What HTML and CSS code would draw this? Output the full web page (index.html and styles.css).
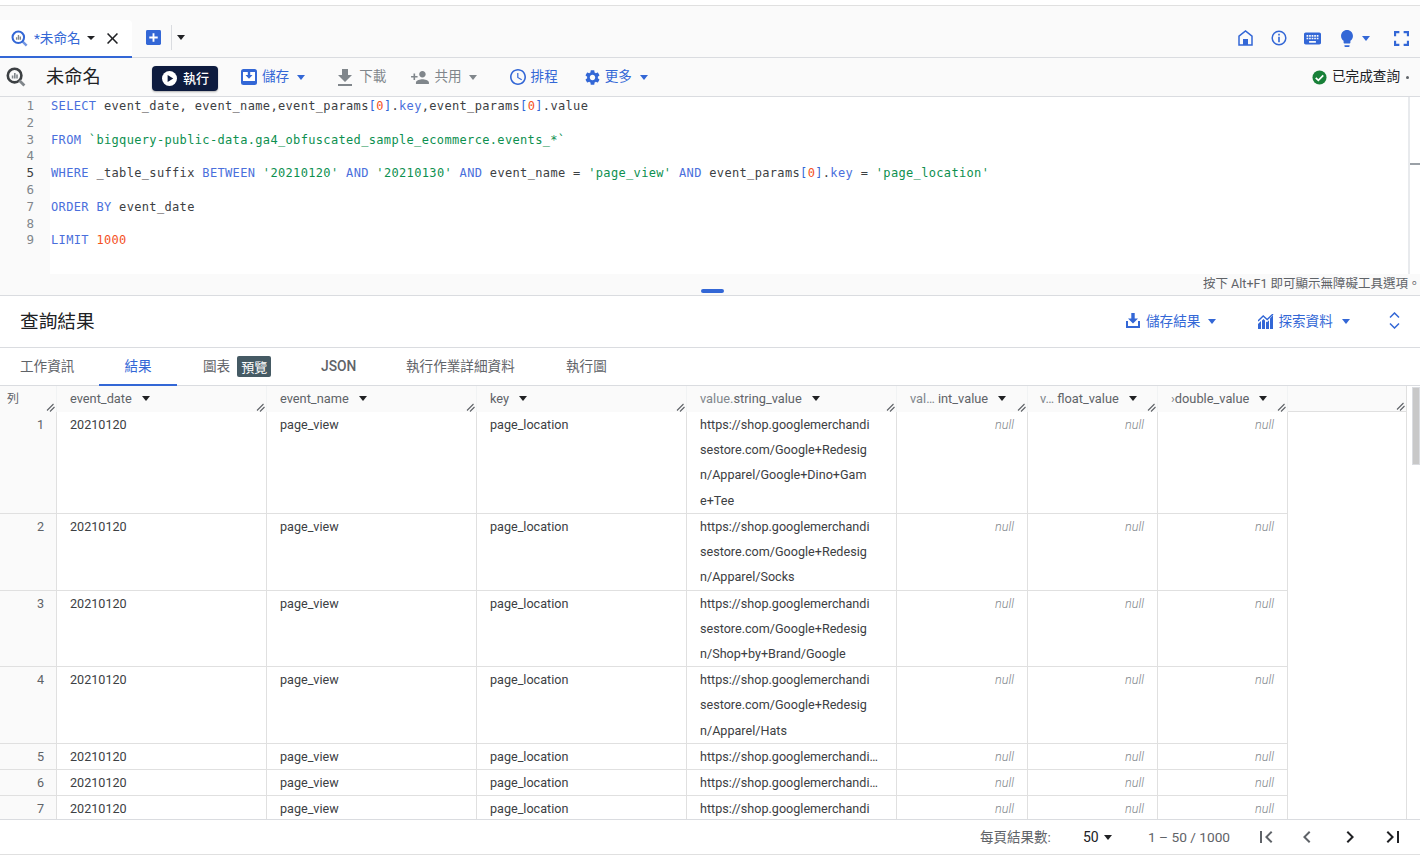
FILE: index.html
```html
<!DOCTYPE html>
<html lang="zh-Hant">
<head>
<meta charset="utf-8">
<title>BigQuery</title>
<link rel="stylesheet" href="styles.css">
</head>
<body>
<svg class="defs" width="0" height="0" aria-hidden="true">
  <symbol id="i-q" viewBox="0 0 20 20"><circle cx="8.6" cy="8.6" r="6.8" fill="none" stroke="currentColor" stroke-width="2.6"/><path d="M13.4 13.4l5 5" stroke="#80868b" stroke-width="2.8" fill="none"/><path d="M5.8 8.6h1.6v3H5.800zM8 6h1.6v5.600H8zM10.200 7.600h1.600v4h-1.600z" fill="#80868b"/></symbol>
  <symbol id="i-qb" viewBox="0 0 20 20"><circle cx="8.6" cy="8.6" r="6.8" fill="none" stroke="currentColor" stroke-width="2.4"/><path d="M13.4 13.4l5 5" stroke="currentColor" stroke-width="2.8" fill="none" opacity=".7"/><path d="M5.8 8.6h1.6v3H5.800zM8 6h1.6v5.600H8zM10.200 7.600h1.600v4h-1.600z" fill="#80868b"/></symbol>
  <symbol id="i-close" viewBox="5 5 14 14"><path d="M19 6.410L17.590 5 12 10.590 6.410 5 5 6.410 10.590 12 5 17.590 6.410 19 12 13.410 17.590 19 19 17.590 13.410 12z"/></symbol>
  <symbol id="i-plus" viewBox="0 0 16 16"><rect width="16" height="16" rx="1.500" fill="currentColor"/><path d="M7 3.500h2V7h3.500v2H9v3.500H7V9H3.500V7H7z" fill="#fff"/></symbol>
  <symbol id="i-home" viewBox="0 0 15 16"><path d="M1 15V6.200L7.500 1 14 6.200V15z" fill="none" stroke="currentColor" stroke-width="1.500"/><rect x="5" y="9" width="5" height="6" fill="currentColor"/></symbol>
  <symbol id="i-info" viewBox="0 0 16 16"><circle cx="8" cy="8" r="6.800" fill="none" stroke="currentColor" stroke-width="1.500"/><path d="M7.200 3.800h1.600v1.600H7.200zM7.200 6.800h1.600v5.400H7.200z" fill="currentColor"/></symbol>
  <symbol id="i-kb" viewBox="2 5 20 14"><path d="M20 5H4c-1.100 0-1.990.9-1.990 2L2 17c0 1.100.9 2 2 2h16c1.100 0 2-.9 2-2V7c0-1.100-.9-2-2-2zm-9 3h2v2h-2V8zm0 3h2v2h-2v-2zM8 8h2v2H8V8zm0 3h2v2H8v-2zm-1 2H5v-2h2v2zm0-3H5V8h2v2zm9 7H8v-2h8v2zm0-4h-2v-2h2v2zm0-3h-2V8h2v2zm3 3h-2v-2h2v2zm0-3h-2V8h2v2z"/></symbol>
  <symbol id="i-bulb" viewBox="5 2 14 20"><path d="M9 21c0 .55.45 1 1 1h4c.55 0 1-.45 1-1v-1H9v1zm3-19C8.140 2 5 5.140 5 9c0 2.380 1.190 4.470 3 5.740V17c0 .55.45 1 1 1h6c.55 0 1-.45 1-1v-2.260c1.810-1.270 3-3.360 3-5.740 0-3.860-3.140-7-7-7z"/></symbol>
  <symbol id="i-full" viewBox="5 5 14 14"><path d="M7 14H5v5h5v-2H7v-3zm-2-4h2V7h3V5H5v5zm12 7h-3v2h5v-5h-2v3zM14 5v2h3v3h2V5h-5z"/></symbol>
  <symbol id="i-save" viewBox="0 0 16 16"><rect width="16" height="16" rx="2.500" fill="currentColor"/><path d="M2 3h12v9H2z" fill="#fff"/><path d="M6.800 2.500h2.400v3.500h2.300L8 9.800 4.500 6h2.300z" fill="currentColor"/></symbol>
  <symbol id="i-dl" viewBox="5 3 14 17"><path d="M19 9h-4V3H9v6H5l7 7 7-7zM5 18v2h14v-2H5z"/></symbol>
  <symbol id="i-share" viewBox="1 4 22 16"><path d="M15 12c2.210 0 4-1.790 4-4s-1.790-4-4-4-4 1.790-4 4 1.790 4 4 4zm-9-2V7H4v3H1v2h3v3h2v-3h3v-2H6zm9 4c-2.670 0-8 1.340-8 4v2h16v-2c0-2.660-5.330-4-8-4z"/></symbol>
  <symbol id="i-clock" viewBox="2 2 20 20"><path d="M11.990 2C6.470 2 2 6.480 2 12s4.470 10 9.990 10C17.520 22 22 17.520 22 12S17.520 2 11.990 2zM12 20c-4.420 0-8-3.580-8-8s3.580-8 8-8 8 3.580 8 8-3.580 8-8 8zm.5-13H11v6l5.250 3.150.75-1.230-4.500-2.670z"/></symbol>
  <symbol id="i-gear" viewBox="2.500 2 19 20"><path d="M19.140 12.940c.04-.3.06-.61.06-.94 0-.32-.02-.64-.07-.94l2.030-1.580c.18-.14.23-.41.12-.61l-1.920-3.320c-.12-.22-.37-.29-.59-.22l-2.390.96c-.5-.38-1.030-.7-1.620-.94l-.36-2.540c-.04-.24-.24-.41-.48-.41h-3.840c-.24 0-.43.17-.47.41l-.36 2.540c-.59.24-1.130.57-1.620.94l-2.390-.96c-.22-.08-.47 0-.59.22L2.740 8.870c-.12.21-.08.47.12.61l2.030 1.580c-.05.3-.09.63-.09.94s.02.64.07.94l-2.030 1.580c-.18.14-.23.41-.12.61l1.920 3.320c.12.22.37.29.59.22l2.390-.96c.5.38 1.030.7 1.620.94l.36 2.540c.05.24.24.41.48.41h3.840c.24 0 .44-.17.47-.41l.36-2.540c.59-.24 1.130-.56 1.620-.94l2.390.96c.22.08.47 0 .59-.22l1.920-3.320c.12-.22.07-.47-.12-.61l-2.010-1.580zM12 15.600c-1.980 0-3.600-1.620-3.600-3.600s1.620-3.600 3.600-3.600 3.600 1.620 3.600 3.600-1.620 3.600-3.600 3.600z"/></symbol>
  <symbol id="i-play" viewBox="0 0 16 16"><circle cx="8" cy="8" r="8" fill="#fff"/><path d="M6 4.200L12 8l-6 3.800z" fill="#0d1b3e"/></symbol>
  <symbol id="i-check" viewBox="0 0 16 16"><circle cx="8" cy="8" r="7.500" fill="#188038"/><path d="M4 8.300l2.800 2.800L12 5.800" fill="none" stroke="#fff" stroke-width="1.800"/></symbol>
  <symbol id="i-saveres" viewBox="0 0 14 15"><path d="M5.300 0h3.400v5.500H12L7 10.500 2 5.500h3.300z"/><path d="M0 8h2v5h10V8h2v7H0z"/></symbol>
  <symbol id="i-chart" viewBox="0 0 16 15"><path d="M0 15V10l3-3v8zM4 15V6.500l1.500-1.500L7 6.500V15zM8 15V7.500l1 .8 2-2V15zM12 15V4.500l3-3.500v14z"/><path d="M0 7l5.200-5 4 3.600L15 0" fill="none" stroke="currentColor" stroke-width="1.400"/></symbol>
  <symbol id="i-fold" viewBox="0 0 11 17"><path d="M1 5.500L5.500 1 10 5.500M1 11.500L5.500 16 10 11.500" fill="none" stroke="currentColor" stroke-width="1.500"/></symbol>
  <symbol id="i-first" viewBox="6 6 13 12"><path d="M18.410 16.590L13.820 12l4.590-4.590L17 6l-6 6 6 6zM6 6h2v12H6z"/></symbol>
  <symbol id="i-last" viewBox="5 6 13 12"><path d="M5.590 7.410L10.180 12l-4.590 4.590L7 18l6-6-6-6zM16 6h2v12h-2z"/></symbol>
  <symbol id="i-prev" viewBox="8 6 8 12"><path d="M15.410 7.410L14 6l-6 6 6 6 1.410-1.410L10.830 12z"/></symbol>
  <symbol id="i-next" viewBox="8 6 8 12"><path d="M10 6L8.590 7.410 13.170 12l-4.580 4.580L10 18l6-6z"/></symbol>
  <symbol id="i-grip" viewBox="0 0 9 9"><path d="M1 7.500L7.500 1M4 8.500L8.500 4" stroke="#5f6368" stroke-width="1.100" fill="none"/></symbol>
</svg>

<div class="app">
  <header class="tabbar">
    <div class="tab">
      <svg class="ic-tabq"><use href="#i-qb"/></svg>
      <span class="tab-name">*未命名</span>
      <i class="caret caret-k caret-sm tab-caret"></i>
      <svg class="ic-close"><use href="#i-close"/></svg>
    </div>
    <svg class="ic-plus"><use href="#i-plus"/></svg>
    <span class="tab-sep"></span>
    <i class="caret caret-k tab-more"></i>
    <div class="top-icons">
      <svg class="ic-home"><use href="#i-home"/></svg>
      <svg class="ic-info"><use href="#i-info"/></svg>
      <svg class="ic-kb"><use href="#i-kb"/></svg>
      <svg class="ic-bulb"><use href="#i-bulb"/></svg>
      <i class="caret caret-b bulb-caret"></i>
      <svg class="ic-full"><use href="#i-full"/></svg>
    </div>
  </header>

  <div class="toolbar">
    <svg class="ic-q"><use href="#i-q"/></svg>
    <h1 class="doc-title">未命名</h1>
    <button class="run"><svg class="ic-play"><use href="#i-play"/></svg><span class="run-t">執行</span></button>
    <span class="act act-save"><svg class="ic-16"><use href="#i-save"/></svg><span class="act-t">儲存</span><i class="caret caret-b act-c"></i></span>
    <span class="act act-dl off"><svg class="ic-dl"><use href="#i-dl"/></svg><span class="act-t">下載</span></span>
    <span class="act act-share off"><svg class="ic-share"><use href="#i-share"/></svg><span class="act-t">共用</span><i class="caret caret-g act-c act-c-share"></i></span>
    <span class="act act-clock"><svg class="ic-16"><use href="#i-clock"/></svg><span class="act-t">排程</span></span>
    <span class="act act-gear"><svg class="ic-gear"><use href="#i-gear"/></svg><span class="act-t act-t-gear">更多</span><i class="caret caret-b act-c"></i></span>
    <span class="status"><svg class="ic-16"><use href="#i-check"/></svg><span class="act-t status-t">已完成查詢</span><span class="status-dot"></span></span>
  </div>

  <section class="editor">
    <div class="gutter">
      <div>1</div><div>2</div><div>3</div><div>4</div><div class="cur">5</div><div>6</div><div>7</div><div>8</div><div>9</div>
    </div>
    <pre class="code"><b>SELECT</b> event_date, event_name,event_params<u>[</u><em>0</em><u>]</u>.<b>key</b>,event_params<u>[</u><em>0</em><u>]</u>.value

<b>FROM</b> <s>`bigquery-public-data.ga4_obfuscated_sample_ecommerce.events_*`</s>

<b>WHERE</b> _table_suffix <b>BETWEEN</b> <s>'20210120'</s> <b>AND</b> <s>'20210130'</s> <b>AND</b> event_name = <s>'page_view'</s> <b>AND</b> event_params<u>[</u><em>0</em><u>]</u>.<b>key</b> = <s>'page_location'</s>

<b>ORDER BY</b> event_date

<b>LIMIT</b> <em>1000</em></pre>
    <div class="ed-scroll"><span class="ed-mark"></span></div>
  </section>
  <div class="ed-foot">
    <span class="drag"></span>
    <span class="a11y">按下 Alt+F1 即可顯示無障礙工具選項。</span>
  </div>

  <div class="res-head">
    <h2 class="res-title">查詢結果</h2>
    <span class="act act-sr"><svg class="ic-sr"><use href="#i-saveres"/></svg><span class="act-t">儲存結果</span><i class="caret caret-b act-c"></i></span>
    <span class="act act-ex"><svg class="ic-chart"><use href="#i-chart"/></svg><span class="act-t act-t-ex">探索資料</span><i class="caret caret-b act-c act-c-ex"></i></span>
    <svg class="ic-fold"><use href="#i-fold"/></svg>
  </div>

  <nav class="rtabs">
    <span class="rt rt1">工作資訊</span>
    <span class="rt rt2">結果</span>
    <span class="rt rt3">圖表<span class="badge">預覽</span></span>
    <span class="rt rt4">JSON</span>
    <span class="rt rt5">執行作業詳細資料</span>
    <span class="rt rt6">執行圖</span>
  </nav>

  <div class="table-wrap">
    <div class="table">
      <div class="row head">
        <div class="h h0">列<svg class="grip"><use href="#i-grip"/></svg></div>
        <div class="h">event_date<i class="caret caret-k h-c"></i><svg class="grip"><use href="#i-grip"/></svg></div>
        <div class="h">event_name<i class="caret caret-k h-c"></i><svg class="grip"><use href="#i-grip"/></svg></div>
        <div class="h">key<i class="caret caret-k h-c"></i><svg class="grip"><use href="#i-grip"/></svg></div>
        <div class="h"><span class="pre">value.</span>string_value<i class="caret caret-k h-c"></i><svg class="grip"><use href="#i-grip"/></svg></div>
        <div class="h"><span class="pre">val… </span>int_value<i class="caret caret-k h-c"></i><svg class="grip"><use href="#i-grip"/></svg></div>
        <div class="h h6"><span class="pre">v… </span>float_value<i class="caret caret-k h-c"></i><svg class="grip"><use href="#i-grip"/></svg></div>
        <div class="h h7"><span class="pre">›</span>double_value<i class="caret caret-k h-c"></i><svg class="grip"><use href="#i-grip"/></svg></div>
        <div class="h h8"><svg class="grip"><use href="#i-grip"/></svg></div>
      </div>

      <div class="row"><div class="c n">1</div><div class="c">20210120</div><div class="c">page_view</div><div class="c">page_location</div><div class="c">https://shop.googlemerchandi<br>sestore.com/Google+Redesig<br>n/Apparel/Google+Dino+Gam<br>e+Tee</div><div class="c nul">null</div><div class="c nul">null</div><div class="c nul">null</div></div>
      <div class="row"><div class="c n">2</div><div class="c">20210120</div><div class="c">page_view</div><div class="c">page_location</div><div class="c">https://shop.googlemerchandi<br>sestore.com/Google+Redesig<br>n/Apparel/Socks</div><div class="c nul">null</div><div class="c nul">null</div><div class="c nul">null</div></div>
      <div class="row"><div class="c n">3</div><div class="c">20210120</div><div class="c">page_view</div><div class="c">page_location</div><div class="c">https://shop.googlemerchandi<br>sestore.com/Google+Redesig<br>n/Shop+by+Brand/Google</div><div class="c nul">null</div><div class="c nul">null</div><div class="c nul">null</div></div>
      <div class="row"><div class="c n">4</div><div class="c">20210120</div><div class="c">page_view</div><div class="c">page_location</div><div class="c">https://shop.googlemerchandi<br>sestore.com/Google+Redesig<br>n/Apparel/Hats</div><div class="c nul">null</div><div class="c nul">null</div><div class="c nul">null</div></div>
      <div class="row"><div class="c n">5</div><div class="c">20210120</div><div class="c">page_view</div><div class="c">page_location</div><div class="c">https://shop.googlemerchandi…</div><div class="c nul">null</div><div class="c nul">null</div><div class="c nul">null</div></div>
      <div class="row"><div class="c n">6</div><div class="c">20210120</div><div class="c">page_view</div><div class="c">page_location</div><div class="c">https://shop.googlemerchandi…</div><div class="c nul">null</div><div class="c nul">null</div><div class="c nul">null</div></div>
      <div class="row"><div class="c n">7</div><div class="c">20210120</div><div class="c">page_view</div><div class="c">page_location</div><div class="c">https://shop.googlemerchandi</div><div class="c nul">null</div><div class="c nul">null</div><div class="c nul">null</div></div>
    </div>
    <div class="vscroll"><span class="thumb"></span></div>
  </div>

  <footer class="pager">
    <span class="pg-label">每頁結果數:</span>
    <span class="pg-size">50</span><i class="caret caret-k pg-c"></i>
    <span class="pg-range">1 – 50 / 1000</span>
    <svg class="pg pg-first"><use href="#i-first"/></svg>
    <svg class="pg pg-prev"><use href="#i-prev"/></svg>
    <svg class="pg pg-next"><use href="#i-next"/></svg>
    <svg class="pg pg-last"><use href="#i-last"/></svg>
  </footer>
</div>
</body>
</html>
```
FILE: styles.css
```css
* { box-sizing: border-box; }
html, body { margin: 0; padding: 0; height: 100%; overflow: hidden; background: #fff; }
body { font-family: Roboto, "Noto Sans CJK TC", sans-serif; font-size: 13px; color: #3c4043; }
.defs { position: absolute; }
svg { display: block; flex: none; fill: currentColor; }
h1, h2 { margin: 0; font-weight: 400; }
.app { display: flex; flex-direction: column; height: 859px; padding-top: 5px; }

.caret { display: block; flex: none; width: 0; height: 0; border-left: 4.5px solid transparent; border-right: 4.5px solid transparent; border-top: 5px solid; }
.caret-sm { border-left-width: 4px; border-right-width: 4px; border-top-width: 4px; }
.caret-k { color: #202124; }
.caret-b { color: #3367d6; }
.caret-g { color: #80868b; }

.tabbar { height: 53px; flex: none; display: flex; align-items: flex-end; background: #fafafa; border-top: 1px solid #e0e0e0; border-bottom: 1px solid #dadce0; }
.tab { width: 132px; height: 38px; background: #fff; border-bottom: 2px solid #3367d6; border-top-right-radius: 4px; display: flex; align-items: center; color: #3367d6; margin-bottom: -1px; }
.ic-tabq { width: 17px; height: 17px; margin-left: 11px; color: #3367d6; }
.tab-name { margin: 0 0 2px 6px; font-size: 13.6px; width: 48px; white-space: nowrap; }
.tab-caret { margin-left: 5px; }
.ic-close { width: 11px; height: 11px; margin-left: 12px; color: #202124; }
.tabbar > .ic-plus { width: 15px; height: 15px; margin: 0 0 12px 14px; color: #3367d6; }
.tab-sep { width: 1px; height: 25px; background: #dadce0; margin: 0 0 7px 10px; }
.tab-more { margin: 0 0 17px 5px; }
.top-icons { margin-left: auto; display: flex; align-items: center; height: 38px; color: #3367d6; }
.ic-home { width: 15px; height: 16px; }
.ic-info { width: 16px; height: 16px; margin-left: 18px; }
.ic-kb { width: 17px; height: 13px; margin-left: 17px; }
.ic-bulb { width: 12px; height: 17px; margin-left: 20px; }
.bulb-caret { margin-left: 9px; }
.ic-full { width: 15px; height: 15px; margin: 0 11px 0 24px; }

.toolbar { height: 39px; flex: none; display: flex; align-items: center; background: #fafafa; border-bottom: 1px solid #dadce0; }
.ic-q { width: 20px; height: 20px; margin-left: 6px; color: #3c4043; }
.doc-title { font-size: 18.2px; line-height: 24px; margin-left: 20px; width: 106px; color: #202124; }
.run { width: 66px; height: 25px; margin-top: 3px; border: 0; border-radius: 4px; background: #0d1b3e; color: #fff; font: 500 13px Roboto, "Noto Sans CJK TC", sans-serif; display: flex; align-items: center; padding: 0 0 0 10px; box-shadow: 0 1px 2px rgba(0,0,0,.3); }
.run-t { margin-bottom: 2px; }
.ic-play { width: 15px; height: 15px; margin-right: 6px; }
.act { display: flex; align-items: center; color: #3367d6; font-size: 13.6px; }
.act.off { color: #80868b; }
.ic-16 { width: 16px; height: 16px; }
.act-t { margin: 0 0 4px 5px; white-space: nowrap; }
.act-c { margin-left: 8px; }
.act-c-share { margin-left: 7px; }
.act-save { margin-left: 23px; }
.act-dl { margin-left: 33px; }
.act-share { margin-left: 25px; }
.act-clock { margin-left: 33px; }
.act-gear { margin-left: 27px; }
.ic-dl { width: 14px; height: 17px; }
.act-dl .act-t { margin-left: 7px; }
.ic-share { width: 18px; height: 13px; }
.ic-gear { width: 15px; height: 15px; }
.status { margin-left: auto; display: flex; align-items: center; color: #202124; font-size: 13.6px; }
.status .ic-16 { width: 15px; height: 15px; }
.status-dot { width: 3px; height: 3px; background: #5f6368; border-radius: 50%; margin: 0 11px 0 6px; }

.editor { height: 177px; flex: none; display: flex; background: #fff; overflow: hidden; }
.gutter { width: 50px; flex: none; background: #fafafa; text-align: right; padding: 1px 16px 0 0; font: 12.5px/16.8px "DejaVu Sans Mono", monospace; color: #80868b; }
.gutter .cur { color: #3c4043; }
.code { margin: 0; flex: 1; padding: 1px 0 0 1px; font: 12px/16.8px "DejaVu Sans Mono", monospace; letter-spacing: .34px; color: #3c4043; white-space: pre; }
.code b { font-weight: 400; color: #4a6fdc; }
.code s { text-decoration: none; color: #0d904f; }
.code em { font-style: normal; color: #f4511e; }
.code u { text-decoration: none; color: #3367d6; }
.ed-scroll { width: 12px; flex: none; border-left: 2px solid #e8eaed; padding-top: 66px; }
.ed-mark { display: block; height: 2px; background: #9aa0a6; }
.ed-foot { height: 22px; flex: none; background: #fafafa; border-bottom: 1px solid #dadce0; position: relative; display: flex; align-items: flex-end; justify-content: flex-end; }
.drag { position: absolute; left: 701px; top: 15px; width: 23px; height: 4px; border-radius: 2px; background: #3367d6; }
.a11y { font-size: 12.5px; line-height: 18px; color: #5f6368; white-space: nowrap; width: 217px; overflow: hidden; margin-bottom: 2px; }

.res-head { height: 52px; flex: none; display: flex; align-items: center; border-bottom: 1px solid #dadce0; }
.res-title { font-size: 18.7px; color: #202124; margin: 0 0 4px 20px; width: 1106px; }
.ic-sr { width: 14px; height: 15px; margin-top: -2px; }
.act-sr .act-t { margin-left: 6px; margin-bottom: 4px; }
.act-ex { margin-left: 42px; }
.ic-chart { width: 16px; height: 15px; }
.act-t-ex { margin-left: 4px; margin-bottom: 4px; }
.act-c-ex { margin-left: 9px; }
.ic-fold { width: 11px; height: 17px; margin: -2px 0 0 39px; color: #3367d6; }

.rtabs { height: 38px; flex: none; display: flex; align-items: center; border-bottom: 1px solid #dadce0; color: #5f6368; font-size: 13.6px; }
.rt { white-space: nowrap; display: flex; align-items: center; height: 100%; padding-bottom: 4px; }
.rt1 { margin-left: 20px; width: 79px; }
.rt2 { width: 78px; justify-content: center; color: #3367d6; border-bottom: 2px solid #3367d6; height: 37px; margin-bottom: -1px; padding-bottom: 3px; }
.rt3 { margin-left: 26px; width: 118px; }
.badge { margin: 4px 0 0 7px; width: 34px; height: 21px; border-radius: 2px; background: #455a64; color: #fff; font-size: 13px; display: flex; align-items: center; justify-content: center; }
.rt4 { width: 85px; font-weight: 500; font-size: 13.8px; padding-bottom: 2px; }
.rt5 { width: 160px; }

.table-wrap { flex: 1; min-height: 0; display: flex; overflow: hidden; border-bottom: 1px solid #dadce0; }
.table { width: 1407px; flex: none; border-right: 1px solid #e0e0e0; overflow: hidden; }
.row { display: grid; grid-template-columns: 57px 210px 210px 210px 210px 131px 130px 130px; line-height: 25.22px; font-size: 12.6px; }
.head { grid-template-columns: 57px 210px 210px 210px 210px 131px 130px 130px 118px; height: 26px; }
.c { padding-left: 13px; border-right: 1px solid #e0e0e0; border-bottom: 1px solid #e0e0e0; white-space: nowrap; overflow: hidden; color: #3c4043; }
.n { background: #fafafa; text-align: right; padding: 0 12px 0 0; color: #5f6368; }
.nul { text-align: right; padding: 0 13px 0 0; font-style: italic; font-weight: 300; color: #80868b; }
.h { position: relative; background: #fafafa; padding-left: 13px; border-right: 1px solid #f1f3f4; color: #5f6368; font-size: 12.8px; display: flex; align-items: flex-start; white-space: nowrap; overflow: hidden; line-height: 25px; }
.h0 { padding-left: 7px; font-size: 12px; line-height: 26px; }
.h8 { border-bottom: 1px solid #e0e0e0; border-right: 0; }
.pre { color: #80868b; white-space: pre; }
.h6 { padding-left: 12px; }
.h7 { padding-left: 13px; }
.h-c { margin: 10px 0 0 10px; }
.grip { position: absolute; right: 1px; bottom: 0; width: 9px; height: 9px; }
.vscroll { flex: 1; padding: 1px 0 0 5px; }
.thumb { display: block; height: 78px; background: #c8c8c8; border: 1px solid #dadce0; }

.pager { height: 35px; flex: none; margin-bottom: 4px; display: flex; align-items: center; border-bottom: 1px solid #e0e0e0; font-size: 14px; }
.pg-label { margin: 0 0 2px 980px; width: 103px; color: #5f6368; font-size: 13.5px; }
.pg-size { color: #202124; width: 21px; }
.pg-range { margin-left: 36px; width: 112px; color: #5f6368; white-space: nowrap; font-size: 13.7px; }
.pg { color: #202124; height: 12px; }
.pg-first { width: 13px; color: #5f6368; }
.pg-prev { width: 8px; margin-left: 30px; color: #5f6368; }
.pg-next { width: 8px; margin-left: 35px; }
.pg-last { width: 13px; margin-left: 32px; }
```
